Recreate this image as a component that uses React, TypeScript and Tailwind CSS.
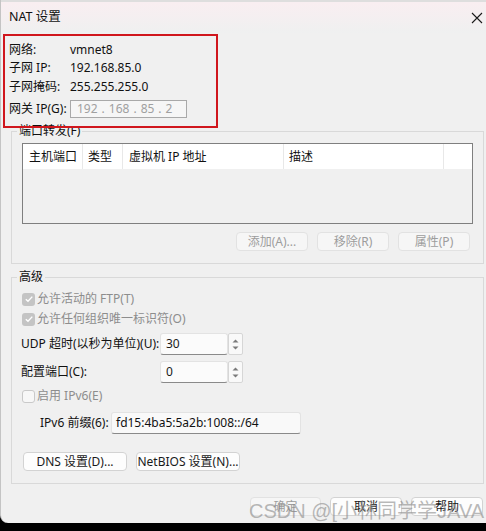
import React from "react";

const font = { fontFamily: '"Noto Sans", "Noto Sans CJK SC", sans-serif' };

function Check({ checked }: { checked: boolean }) {
  if (checked) {
    return (
      <div className="w-[13px] h-[13px] rounded-[3px] bg-[#c4c4c4] flex items-center justify-center shrink-0">
        <svg width="10" height="10" viewBox="0 0 10 10">
          <path d="M1.8 5.2 L4 7.3 L8.3 2.6" fill="none" stroke="#ffffff" strokeWidth="1.4" />
        </svg>
      </div>
    );
  }
  return <div className="w-[13px] h-[13px] rounded-[3px] border border-[#c9c9c9] bg-[#f7f7f7] shrink-0" />;
}

function Btn({ children, w, disabled }: { children: React.ReactNode; w: string; disabled?: boolean }) {
  return (
    <div
      className={`${w} h-[19px] rounded-[4px] border flex items-center justify-center text-[12px] leading-none ${
        disabled ? "border-[#e2e2e2] bg-[#f6f6f6] text-[#9d9d9d]" : "border-[#d3d3d3] bg-[#fdfdfd] text-[#1a1a1a]"
      }`}
    >
      {children}
    </div>
  );
}

function Spin({ value }: { value: string }) {
  return (
    <div className="flex h-[22px]">
      <div className="w-[68px] h-[22px] bg-[#fbfbfb] border border-[#e3e3e3] border-b-[#8a8a8a] rounded-[3px] pl-[5px] flex items-center text-[12px] text-[#1a1a1a]">
        {value}
      </div>
      <div className="w-[15px] h-[22px] bg-[#f9f9f9] border border-[#d6d6d6] rounded-[2px] flex flex-col items-center justify-center gap-[3px]">
        <svg width="7" height="4" viewBox="0 0 7 4">
          <path d="M0.5 3.5 L3.5 0.5 L6.5 3.5 Z" fill="#7a7a7a" />
        </svg>
        <svg width="7" height="4" viewBox="0 0 7 4">
          <path d="M0.5 0.5 L3.5 3.5 L6.5 0.5 Z" fill="#7a7a7a" />
        </svg>
      </div>
    </div>
  );
}

export default function App() {
  return (
    <div className="w-[486px] h-[531px] bg-black relative overflow-hidden text-[12px] text-[#111]" style={font}>
      <div className="h-[523px] bg-[#f0f0f0] rounded-bl-[8px] border-l border-[#c4c4c4] flex flex-col">
        <div className="h-[2px] bg-[#dedede]" />
        {/* title bar */}
        <div className="h-[31px] flex items-center justify-between pl-[8px] pr-[3px] bg-gradient-to-b from-[#f9eef1] to-[#eff0f0]">
          <span className="text-[12.5px] text-[#111]">NAT 设置</span>
          <svg width="12" height="12" viewBox="0 0 12 12">
            <path d="M1 1 L11 11 M11 1 L1 11" stroke="#1a1a1a" strokeWidth="1.1" />
          </svg>
        </div>

        {/* red highlighted box */}
        <div className="relative z-10 ml-[2px] mt-[1px] w-[215px] h-[94px] border-2 border-[#d0161d] pl-[4px] pt-[5px] flex flex-col">
          <div className="h-[18px] flex items-center">
            <span className="w-[61px]">网络:</span>
            <span>vmnet8</span>
          </div>
          <div className="h-[18px] flex items-center">
            <span className="w-[61px]">子网 IP:</span>
            <span>192.168.85.0</span>
          </div>
          <div className="h-[20px] flex items-center">
            <span className="w-[61px]">子网掩码:</span>
            <span>255.255.255.0</span>
          </div>
          <div className="h-[18px] mt-[3px] flex items-center">
            <span className="w-[61px]">网关 IP(G):</span>
            <div className="w-[117px] h-[18px] border border-[#a9a9a9] bg-[#f6f6f6] flex items-center pl-[6px] gap-[4px] text-[#a0a0a0]">
              <span>192</span>
              <span>.</span>
              <span>168</span>
              <span>.</span>
              <span>85</span>
              <span>.</span>
              <span>2</span>
            </div>
          </div>
        </div>

        {/* port forwarding group */}
        <fieldset className="-mt-[5px] ml-[10px] w-[473px] h-[141px] border border-[#d9d9d9]">
          <legend className="ml-[5px] px-[2px] leading-[16px] text-[12px]">端口转发(F)</legend>
          <div className="mt-[4px] ml-[10px] w-[451px] h-[81px] border border-[#7f7f7f] bg-[#f0f0f0] flex flex-col">
            <div className="h-[25px] bg-white flex text-[12px]">
              <div className="w-[60px] border-r border-[#e8e8e8] pl-[6px] flex items-center">主机端口</div>
              <div className="w-[40px] border-r border-[#e8e8e8] pl-[5px] flex items-center">类型</div>
              <div className="w-[161px] border-r border-[#e8e8e8] pl-[6px] flex items-center">虚拟机 IP 地址</div>
              <div className="w-[160px] border-r border-[#e8e8e8] pl-[5px] flex items-center">描述</div>
              <div className="flex-1" />
            </div>
          </div>
          <div className="mt-[8px] ml-[10px] w-[451px] pr-[3px] flex justify-end gap-[9px]">
            <Btn w="w-[72px]" disabled>添加(A)...</Btn>
            <Btn w="w-[72px]" disabled>移除(R)</Btn>
            <Btn w="w-[72px]" disabled>属性(P)</Btn>
          </div>
        </fieldset>

        {/* advanced group */}
        <fieldset className="mt-[5px] ml-[10px] w-[473px] h-[215px] border border-[#d9d9d9]">
          <legend className="ml-[5px] px-[2px] leading-[16px] text-[12px]">高级</legend>
          <div className="mt-[4px] ml-[10px] h-[20px] flex items-center gap-[2px] text-[#8d8d8d]">
            <Check checked />
            <span>允许活动的 FTP(T)</span>
          </div>
          <div className="ml-[10px] h-[20px] flex items-center gap-[2px] text-[#8d8d8d]">
            <Check checked />
            <span>允许任何组织唯一标识符(O)</span>
          </div>
          <div className="mt-[4px] ml-[9px] h-[22px] flex items-center">
            <span className="w-[139px]">UDP 超时(以秒为单位)(U):</span>
            <Spin value="30" />
          </div>
          <div className="mt-[6px] ml-[9px] h-[22px] flex items-center">
            <span className="w-[139px]">配置端口(C):</span>
            <Spin value="0" />
          </div>
          <div className="mt-[3px] ml-[10px] h-[20px] flex items-center gap-[2px] text-[#8d8d8d]">
            <Check checked={false} />
            <span>启用 IPv6(E)</span>
          </div>
          <div className="mt-[6px] ml-[28px] h-[22px] flex items-center">
            <span className="w-[71px]">IPv6 前缀(6):</span>
            <div className="w-[190px] h-[22px] bg-[#f9f9f9] border border-[#e3e3e3] border-b-[#8a8a8a] rounded-[3px] pl-[4px] flex items-center">
              fd15:4ba5:5a2b:1008::/64
            </div>
          </div>
          <div className="mt-[18px] ml-[11px] flex gap-[9px]">
            <Btn w="w-[104px]">DNS 设置(D)...</Btn>
            <Btn w="w-[104px]">NetBIOS 设置(N)...</Btn>
          </div>
        </fieldset>

        {/* bottom buttons */}
        <div className="mt-[13px] flex justify-end gap-[9px] pr-[3px]">
          <Btn w="w-[71px]" disabled>确定</Btn>
          <Btn w="w-[72px]">取消</Btn>
          <Btn w="w-[72px]">帮助</Btn>
        </div>
      </div>

      {/* watermark overlay */}
      <div
        className="absolute left-[249px] top-[498px] text-[20px] leading-[26px] text-[#8a8a8a]/60 whitespace-nowrap pointer-events-none"
        style={{ fontFamily: '"Liberation Sans", "Noto Sans CJK SC", sans-serif' }}
      >
        CSDN @[小林同学学JAVA
      </div>
    </div>
  );
}
